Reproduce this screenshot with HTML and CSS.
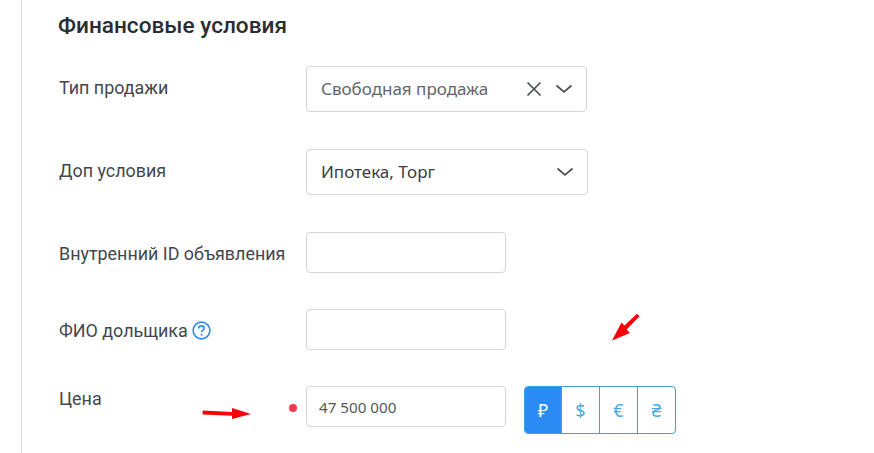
FILE: index.html
```html
<!DOCTYPE html>
<html lang="en">
  <head>
    <meta charset="UTF-8" />
    <meta name="viewport" content="width=device-width, initial-scale=1.0" />
    <title>Финансовые условия</title>
    <link rel="stylesheet" href="styles.css">
  </head>
  <body>
    <div class="section">
      <h2 class="title">Финансовые условия</h2>

      <div class="row row-select">
        <div class="label">Тип продажи</div>
        <div class="select select-first">
          <span class="select-value muted">Свободная продажа</span>
          <svg class="icon-clear" width="16" height="16" viewBox="0 0 16 16">
            <path d="M1.5 1.5 L14.5 14.5 M14.5 1.5 L1.5 14.5" />
          </svg>
          <svg class="icon-chevron" width="18" height="10" viewBox="0 0 18 10">
            <path d="M1.5 1.5 L9 8 L16.5 1.5" />
          </svg>
        </div>
      </div>

      <div class="row row-select">
        <div class="label">Доп условия</div>
        <div class="select">
          <span class="select-value">Ипотека, Торг</span>
          <svg class="icon-chevron" width="18" height="10" viewBox="0 0 18 10">
            <path d="M1.5 1.5 L9 8 L16.5 1.5" />
          </svg>
        </div>
      </div>

      <div class="row">
        <div class="label">Внутренний ID объявления</div>
        <div class="input"></div>
      </div>

      <div class="row">
        <div class="label">
          ФИО дольщика
          <svg class="icon-help" width="19" height="19" viewBox="0 0 19 19">
            <circle cx="9.5" cy="9.5" r="8.4" />
            <path d="M6.8 7.4 C6.8 5.8 8 4.9 9.5 4.9 C11 4.9 12.2 5.8 12.2 7.2 C12.2 9 9.5 9.2 9.5 11.2" />
            <circle class="help-dot" cx="9.5" cy="13.8" r="1" />
          </svg>
        </div>
        <div class="input"></div>
      </div>

      <div class="row row-price">
        <div class="label label-price">Цена</div>
        <div class="input input-price">47 500 000</div>
        <div class="currency">
          <div class="currency-btn active">₽</div>
          <div class="currency-btn">$</div>
          <div class="currency-btn">€</div>
          <div class="currency-btn">₴</div>
        </div>
        <span class="required-dot"></span>
      </div>
    </div>

    <svg class="arrow arrow-right" width="51" height="16" viewBox="0 0 51 16">
      <path d="M2 3.6 L31 5 L31 1 L50 7 L31 12 L31 8.8 L2 7.4 Q0.5 5.5 2 3.6 Z" />
    </svg>
    <svg class="arrow arrow-down" width="30" height="30" viewBox="0 0 30 30">
      <path d="M26 0.8 L28.6 3.2 L15.6 16.6 L19 20 L1 27.5 L10.5 9.6 L13.4 12.6 Z" />
    </svg>
  </body>
</html>
```

FILE: styles.css
```css
* {
  margin: 0;
  padding: 0;
  box-sizing: border-box;
}

body {
  background: #fff;
  font-family: "Roboto", sans-serif;
  color: #33373d;
  height: 453px;
  overflow: hidden;
  position: relative;
}

.section {
  margin-left: 21px;
  height: 453px;
  border-left: 1px solid #dedede;
  padding: 13px 0 0 36px;
}

.title {
  font-size: 22.6px;
  line-height: 26px;
  font-weight: 500;
  color: #2a2e34;
  margin-bottom: 27px;
}

.row {
  display: flex;
  align-items: flex-start;
  margin-bottom: 36px;
}

.row-select {
  margin-bottom: 37px;
}

.label {
  width: 248px;
  padding: 12px 0 0 1px;
  font-size: 17.9px;
  line-height: 20px;
  font-weight: 400;
  color: #43474d;
  flex-shrink: 0;
}

.label-price {
  padding-top: 3px;
}

.select {
  width: 282px;
  height: 46px;
  border: 1px solid #d3d6de;
  border-radius: 4px;
  display: flex;
  align-items: center;
  padding: 0 13px 0 14px;
  font-family: "Noto Sans", sans-serif;
  font-size: 17px;
  color: #3a3e44;
}

.select-first {
  width: 281px;
}

.select-value {
  flex: 1;
  margin-top: -1px;
}

.muted {
  color: #62666c;
}

.icon-clear {
  margin-right: 13px;
}

.icon-clear path,
.icon-chevron path {
  fill: none;
  stroke: #4a4f56;
  stroke-width: 1.7;
}

.input {
  width: 200px;
  height: 41px;
  border: 1px solid #d3d6de;
  border-radius: 4px;
}

.input-price {
  font-family: "Noto Sans", sans-serif;
  font-size: 15.2px;
  line-height: 41px;
  padding-left: 12px;
  color: #54585e;
}

.icon-help {
  vertical-align: -3px;
}

.icon-help circle,
.icon-help path {
  fill: none;
  stroke: #2b8cf0;
  stroke-width: 1.6;
}

.icon-help .help-dot {
  fill: #2b8cf0;
  stroke: none;
}

.row-price {
  position: relative;
}

.currency {
  display: flex;
  margin-left: 18px;
  height: 48px;
  border: 1px solid #3ea0e4;
  border-radius: 4px;
  overflow: hidden;
}

.currency-btn {
  width: 38px;
  display: flex;
  align-items: center;
  justify-content: center;
  font-family: "Noto Sans", sans-serif;
  font-size: 18px;
  color: #4aaae8;
  border-left: 1px solid #3ea0e4;
}

.currency-btn:first-child {
  border-left: none;
  width: 36px;
}

.currency-btn.active {
  background: #2b8cf6;
  color: #fff;
}

.required-dot {
  position: absolute;
  left: 231px;
  top: 18px;
  width: 8px;
  height: 8px;
  border-radius: 50%;
  background: #f8384f;
}

.arrow {
  position: absolute;
}

.arrow path {
  fill: #fb0007;
}

.arrow-right {
  left: 201px;
  top: 407px;
}

.arrow-down {
  left: 611px;
  top: 313px;
}
```
